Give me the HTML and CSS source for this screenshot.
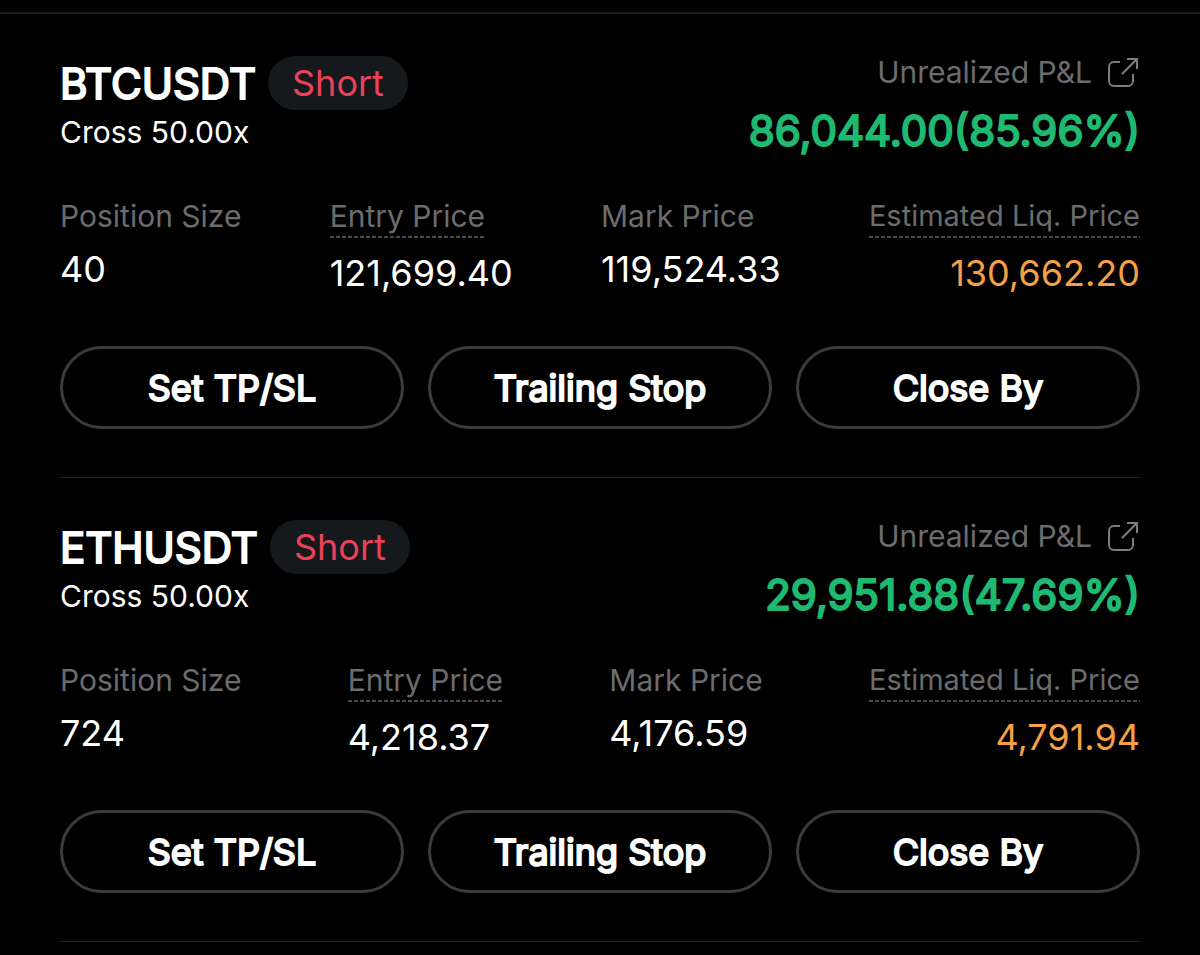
FILE: index.html
```
<!DOCTYPE html>
<html lang="en">
<head>
    <meta charset="UTF-8">
    <meta name="viewport" content="width=device-width, initial-scale=1.0">
    <title>Positions</title>
    <link rel="stylesheet" href="styles.css">
</head>
<body>
    <main class="positions">
        <section class="position">
            <div class="position-header">
                <div class="position-info">
                    <div class="title-row">
                        <h2>BTCUSDT</h2>
                        <span class="side">Short</span>
                    </div>
                    <div class="leverage">Cross 50.00x</div>
                </div>
                <div class="pnl">
                    <a href="#" class="pnl-label">
                        Unrealized P&amp;L
                        <svg class="share-icon" viewBox="0 0 34 34" aria-hidden="true">
                            <path d="M14 7H8a5 5 0 0 0-5 5v14a5 5 0 0 0 5 5h14a5 5 0 0 0 5-5v-7M21 4h10v10M31 4L16 19"/>
                        </svg>
                    </a>
                    <div class="pnl-value">86,044.00(85.96%)</div>
                </div>
            </div>
            <dl class="stats">
                <div class="stat">
                    <dt>Position Size</dt>
                    <dd>40</dd>
                </div>
                <div class="stat">
                    <dt class="hint">Entry Price</dt>
                    <dd>121,699.40</dd>
                </div>
                <div class="stat">
                    <dt>Mark Price</dt>
                    <dd>119,524.33</dd>
                </div>
                <div class="stat stat-liq">
                    <dt class="hint">Estimated Liq. Price</dt>
                    <dd>130,662.20</dd>
                </div>
            </dl>
            <div class="button-group">
                <button type="button">Set TP/SL</button>
                <button type="button">Trailing Stop</button>
                <button type="button">Close By</button>
            </div>
        </section>

        <section class="position">
            <div class="position-header">
                <div class="position-info">
                    <div class="title-row">
                        <h2>ETHUSDT</h2>
                        <span class="side">Short</span>
                    </div>
                    <div class="leverage">Cross 50.00x</div>
                </div>
                <div class="pnl">
                    <a href="#" class="pnl-label">
                        Unrealized P&amp;L
                        <svg class="share-icon" viewBox="0 0 34 34" aria-hidden="true">
                            <path d="M14 7H8a5 5 0 0 0-5 5v14a5 5 0 0 0 5 5h14a5 5 0 0 0 5-5v-7M21 4h10v10M31 4L16 19"/>
                        </svg>
                    </a>
                    <div class="pnl-value">29,951.88(47.69%)</div>
                </div>
            </div>
            <dl class="stats">
                <div class="stat">
                    <dt>Position Size</dt>
                    <dd>724</dd>
                </div>
                <div class="stat">
                    <dt class="hint">Entry Price</dt>
                    <dd>4,218.37</dd>
                </div>
                <div class="stat">
                    <dt>Mark Price</dt>
                    <dd>4,176.59</dd>
                </div>
                <div class="stat stat-liq">
                    <dt class="hint">Estimated Liq. Price</dt>
                    <dd>4,791.94</dd>
                </div>
            </dl>
            <div class="button-group">
                <button type="button">Set TP/SL</button>
                <button type="button">Trailing Stop</button>
                <button type="button">Close By</button>
            </div>
        </section>
    </main>
</body>
</html>
```
FILE: styles.css
```
* {
    box-sizing: border-box;
}
body {
    margin: 0;
    padding-top: 12px;
    background-color: #000;
    color: #fff;
    font-family: Inter, sans-serif;
    font-size: 30px;
    line-height: 36px;
}
.positions {
    border-top: 2px solid #1c1c1c;
    padding: 0 60px;
}
.position {
    padding: 40px 0 48px;
    border-bottom: 1px solid #242424;
}
.position-header {
    display: flex;
    justify-content: space-between;
    align-items: flex-start;
}
.title-row {
    display: flex;
    align-items: flex-start;
    gap: 12px;
    height: 60px;
}
h2 {
    margin: 0;
    font-size: 42px;
    font-weight: 400;
    line-height: 60px;
    -webkit-text-stroke: 2px;
}
.side {
    margin-top: 2px;
    padding: 6px 24px;
    border-radius: 27px;
    background-color: #16191c;
    color: #e9425a;
    font-size: 36px;
    line-height: 42px;
}
.pnl {
    text-align: right;
}
.pnl-label {
    display: flex;
    justify-content: flex-end;
    align-items: center;
    gap: 14px;
    color: #6b6c6e;
    text-decoration: none;
}
.share-icon {
    width: 34px;
    height: 34px;
    fill: none;
    stroke: #7b7c7e;
    stroke-width: 2;
}
.pnl-value {
    margin-top: 14px;
    color: #1fb971;
    font-size: 42px;
    font-weight: 400;
    line-height: 54px;
    -webkit-text-stroke: 2px;
}
.stats {
    display: flex;
    justify-content: space-between;
    margin: 40px 0 52px;
}
.stat dt {
    width: fit-content;
    color: #6b6c6e;
}
.stat .hint {
    padding-bottom: 4px;
    background: repeating-linear-gradient(to right, #4a4b4d 0 4px, transparent 4px 6px) bottom / 100% 2px no-repeat;
}
.stat dd {
    margin: 14px 0 0;
    font-size: 36px;
    line-height: 42px;
}
.stat-liq dt {
    font-size: 29px;
}
.stat-liq dd {
    color: #f5a044;
    text-align: right;
}
.button-group {
    display: grid;
    grid-template-columns: repeat(3, 1fr);
    gap: 24px;
}
button {
    height: 83px;
    border: 3px solid #3a3b3d;
    border-radius: 42px;
    background: none;
    color: #fff;
    font-family: inherit;
    font-size: 36px;
    font-weight: 400;
    -webkit-text-stroke: 2px;
    cursor: pointer;
}
button:hover {
    background-color: #16191c;
}
```
